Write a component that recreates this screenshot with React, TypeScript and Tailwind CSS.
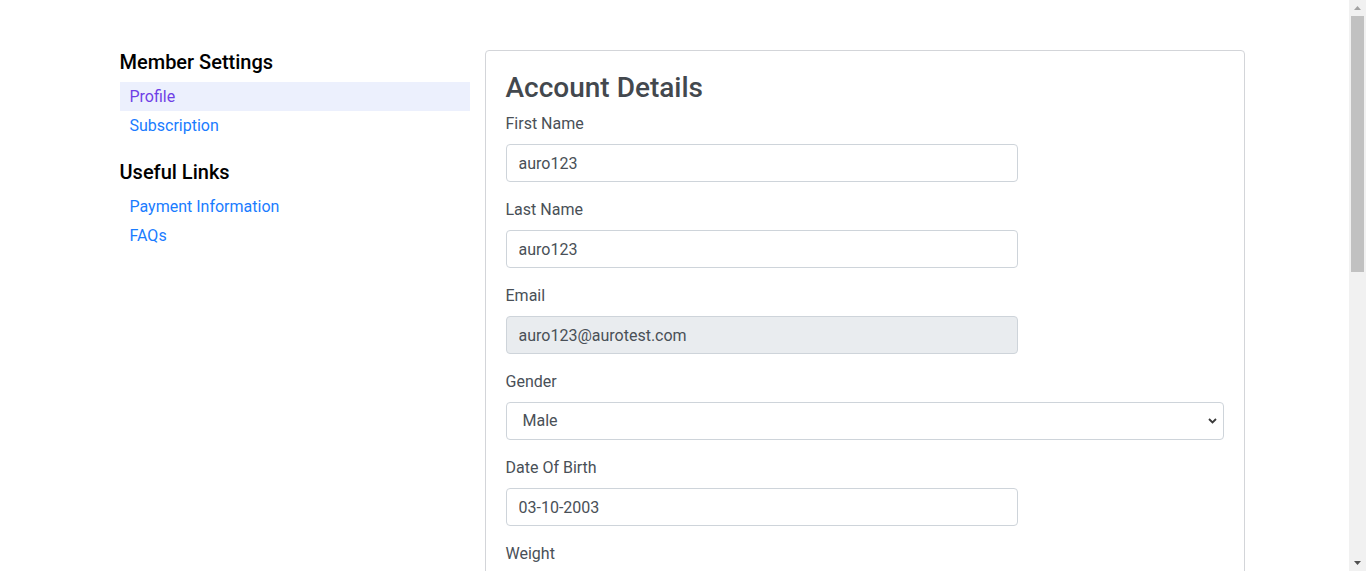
import { useState } from "react";

const FONT = { fontFamily: "Roboto, 'Liberation Sans', sans-serif" };

function Field({
  label,
  value,
  disabled,
}: {
  label: string;
  value: string;
  disabled?: boolean;
}) {
  return (
    <div className="mb-4">
      <label className="block mb-2 text-base leading-6 text-[#495057]">{label}</label>
      <input
        defaultValue={value}
        disabled={disabled}
        className={`block w-[512px] h-[38px] rounded border border-[#ced4da] px-3 text-base text-[#495057] outline-none ${
          disabled ? "bg-[#e9ecef]" : "bg-white"
        }`}
      />
    </div>
  );
}

// browser scrollbar as seen in the screenshot
function ScrollBar() {
  return (
    <div className="fixed top-0 right-0 h-screen w-[17px] bg-[#f1f1f1] flex flex-col items-center">
      <div className="h-[16px] flex items-center justify-center">
        <svg width="7" height="4" viewBox="0 0 7 4">
          <path d="M0 4L3.5 0 7 4z" fill="#a3a3a3" />
        </svg>
      </div>
      <div className="w-[13px] h-[256px] bg-[#c1c1c1]" />
      <div className="flex-1" />
      <div className="h-[16px] flex items-center justify-center">
        <svg width="7" height="4" viewBox="0 0 7 4">
          <path d="M0 0L3.5 4 7 0z" fill="#505050" />
        </svg>
      </div>
    </div>
  );
}

export default function App() {
  const [gender, setGender] = useState("Male");

  return (
    <div className="min-h-screen bg-white pr-[17px]" style={FONT}>
      <div className="mx-auto w-[1140px] pt-[50px] pb-[60px] flex">
        {/* Sidebar */}
        <div className="w-[380px] px-[15px]">
          <h4 className="text-xl leading-6 font-medium text-black mb-2">Member Settings</h4>
          <ul>
            <li className="h-[29px] flex items-center pl-[10px] bg-[#ecf0fd] text-[#6f3fe6]">Profile</li>
            <li className="h-[29px] flex items-center pl-[10px] text-[#1a7cff]">Subscription</li>
          </ul>
          <h4 className="text-xl leading-6 font-medium text-black mt-5 mb-2">Useful Links</h4>
          <ul>
            <li className="h-[29px] flex items-center pl-[10px] text-[#1a7cff]">Payment Information</li>
            <li className="h-[29px] flex items-center pl-[10px] text-[#1a7cff]">FAQs</li>
          </ul>
        </div>

        {/* Account form */}
        <div className="w-[760px]">
          <div className="border border-[#d3d5d9] rounded px-5 pt-[20px] pb-6">
            <h2 className="text-[28px] leading-[34px] font-medium text-[#43484e] mb-[7px]">Account Details</h2>
            <Field label="First Name" value="auro123" />
            <Field label="Last Name" value="auro123" />
            <Field label="Email" value="auro123@aurotest.com" disabled />
            <div className="mb-4">
              <label className="block mb-2 text-base leading-6 text-[#495057]">Gender</label>
              <div className="relative">
                <select
                  value={gender}
                  onChange={(e) => setGender(e.target.value)}
                  className="block w-full h-[38px] appearance-none rounded border border-[#ced4da] bg-white pl-4 pr-8 text-base text-[#495057] outline-none"
                >
                  <option>Male</option>
                  <option>Female</option>
                  <option>Other</option>
                </select>
                <svg
                  className="absolute right-[7px] top-[16px] pointer-events-none"
                  width="9"
                  height="6"
                  viewBox="0 0 9 6"
                >
                  <path d="M1 1l3.5 3.5L8 1" fill="none" stroke="#3a3a3a" strokeWidth="1.8" />
                </svg>
              </div>
            </div>
            <Field label="Date Of Birth" value="03-10-2003" />
            <Field label="Weight" value="65" />
            <Field label="Height" value="170" />
            <Field label="Phone Number" value="9876543210" />
            <Field label="City" value="Bhubaneswar" />
            <Field label="Country" value="India" />
            <button className="mt-2 h-[38px] px-3 rounded bg-[#007bff] text-white text-base">Save Changes</button>
          </div>
        </div>
      </div>
      <ScrollBar />
    </div>
  );
}
